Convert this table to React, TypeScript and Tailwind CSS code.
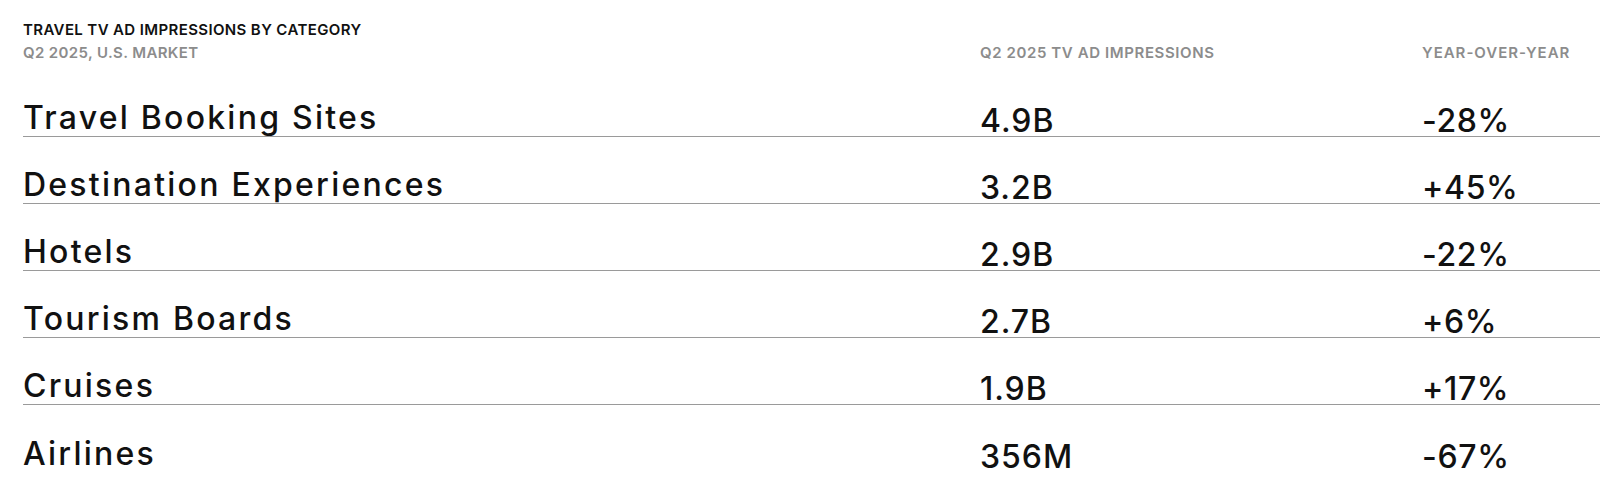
import React from 'react'

type Row = { label: string; value: string; yoy: string }

const rows: Row[] = [
  { label: 'Travel Booking Sites', value: '4.9B', yoy: '-28%' },
  { label: 'Destination Experiences', value: '3.2B', yoy: '+45%' },
  { label: 'Hotels', value: '2.9B', yoy: '-22%' },
  { label: 'Tourism Boards', value: '2.7B', yoy: '+6%' },
  { label: 'Cruises', value: '1.9B', yoy: '+17%' },
  { label: 'Airlines', value: '356M', yoy: '-67%' },
]

const App: React.FC = (): JSX.Element => {
  return (
    <div className="w-[1600px] h-[481px] overflow-hidden bg-white pl-[23px] pt-[22px] font-['Inter',sans-serif] text-[#111]">
      {/* heading + column headers */}
      <div className="flex items-start">
        <div className="w-[957px]">
          <div className="text-[15px] leading-[15px] font-semibold tracking-[0.025em]">TRAVEL TV AD IMPRESSIONS BY CATEGORY</div>
          <div className="mt-[8px] text-[15px] leading-[15px] font-semibold tracking-[0.025em] text-[#8c8c8c]">Q2 2025, U.S. MARKET</div>
        </div>
        <div className="w-[442px] pt-[23px] text-[15px] leading-[15px] font-semibold tracking-[0.04em] text-[#8c8c8c]">
          Q2 2025 TV AD IMPRESSIONS
        </div>
        <div className="pt-[23px] text-[15px] leading-[15px] font-semibold tracking-[0.065em] text-[#8c8c8c]">YEAR-OVER-YEAR</div>
      </div>

      <div className="mt-[10px]">
        {rows.map((row, i) => (
          <div
            key={row.label}
            className={
              i < rows.length - 1
                ? 'flex items-end h-[67px] border-b border-[#9a9a9a]'
                : 'flex items-end h-[67px]'
            }
          >
            <div className="w-[957px] pb-[2px] text-[32px] leading-[32px] font-medium tracking-[0.07em]">
              {row.label}
            </div>
            <div className="w-[442px] -mb-[1px] text-[32px] leading-[32px] font-medium tracking-[0.03em]">{row.value}</div>
            <div className="-mb-[1px] text-[32px] leading-[32px] font-medium tracking-[0.02em]">{row.yoy}</div>
          </div>
        ))}
      </div>
    </div>
  )
}

export default App
